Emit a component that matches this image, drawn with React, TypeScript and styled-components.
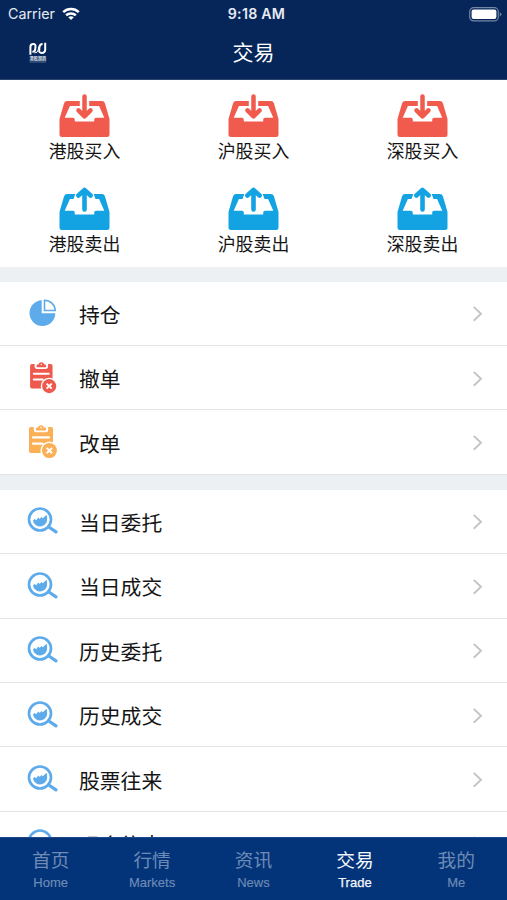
import React from "react";
import styled, { createGlobalStyle } from "styled-components";

const Global = createGlobalStyle`
  * { box-sizing: border-box; }
  body { margin: 0; background: #fff; }
`;

const Screen = styled.div`
  width: 507px;
  height: 900px;
  overflow: hidden;
  display: flex;
  flex-direction: column;
  background: #fff;
  color: #151515;
  font-family: "Liberation Sans", "Noto Sans CJK SC", sans-serif;
`;

const Header = styled.header`
  height: 80px;
  flex: none;
  background: #06265a;
  color: #fff;
  border-bottom: 1px solid #2a4470;
`;

const StatusBar = styled.div`
  height: 27px;
  display: grid;
  grid-template-columns: 1fr auto 1fr;
  align-items: center;
  padding: 1px 5px 0 8px;
  font-family: Inter, sans-serif;
  font-size: 14.3px;
  line-height: 18px;
  color: #e6ebf3;
`;

const Carrier = styled.div`
  display: flex;
  align-items: center;
  gap: 7px;
`;

const Clock = styled.div`
  font-weight: 600;
  font-size: 14.2px;
  letter-spacing: 0.25px;
  padding-left: 3px;
`;

const BatterySlot = styled.div`
  display: flex;
  justify-content: flex-end;
`;

const TitleBar = styled.div`
  height: 52px;
  display: grid;
  grid-template-columns: 1fr auto 1fr;
  align-items: center;
  padding-left: 29px;
  padding-right: 29px;
`;

const Title = styled.h1`
  margin: 0;
  font-size: 21px;
  line-height: 30px;
  font-weight: 400;
`;

const Actions = styled.section`
  height: 187px;
  flex: none;
  display: grid;
  grid-template-columns: repeat(3, 1fr);
  grid-template-rows: 93px 93px;
  padding-top: 1px;
`;

const Action = styled.div`
  display: flex;
  flex-direction: column;
  align-items: center;
  padding-top: 13px;
  svg { display: block; }
`;

const ActionLabel = styled.span`
  font-size: 17.9px;
  line-height: 26px;
  margin-top: 2px;
`;

const Gap = styled.div<{ $h: number }>`
  height: ${(p) => p.$h}px;
  flex: none;
  background: #edf0f3;
`;

const List = styled.main`
  flex: 1;
  min-height: 0;
  overflow: hidden;
`;

const Row = styled.div`
  height: 64.4px;
  display: grid;
  grid-template-columns: 52px 1fr 12px;
  align-items: center;
  padding: 0 23px 0 27px;
  border-bottom: 1.5px solid #e3e4e6;
  svg { display: block; }
`;

const RowLabel = styled.span`
  font-size: 20.8px;
  line-height: 30px;
  padding-top: 5px;
`;

const TabBar = styled.nav`
  height: 63px;
  flex: none;
  display: grid;
  grid-template-columns: repeat(5, 1fr);
  background: #033479;
  border-top: 1px solid #1c4a88;
`;

const Tab = styled.div<{ $active?: boolean }>`
  display: flex;
  flex-direction: column;
  align-items: center;
  padding-top: 10px;
  color: ${(p) => (p.$active ? "#f4f7fb" : "#6e8bb6")};
`;

const TabName = styled.span`
  font-size: 18.7px;
  line-height: 26px;
`;

const TabSub = styled.span<{ $active?: boolean }>`
  font-size: 13px;
  line-height: 17px;
  -webkit-text-stroke: ${(p) => (p.$active ? "0.25px" : "0.15px")};
`;

const Wifi = () => (
  <svg width="18" height="14" viewBox="0 0 18 14" fill="none" stroke="#fff" strokeWidth="2.5">
    <path d="M1.2 5.1C5.6 .9 12.4 .9 16.8 5.1" />
    <path d="M4.1 8.3C6.9 5.8 11.1 5.8 13.9 8.3" />
    <path d="M9 13L6.2 10.3Q9 8.1 11.8 10.3Z" fill="#fff" stroke="none" />
  </svg>
);

const Battery = () => (
  <svg width="33" height="15" viewBox="0 0 33 15">
    <rect x=".7" y=".7" width="28.6" height="13.2" rx="4" fill="none" stroke="#7386a5" strokeWidth="1.2" />
    <rect x="2.6" y="2.5" width="24.8" height="9.6" rx="2" fill="#fff" />
    <path d="M30.8 5.2Q32.4 6 32.4 7.3T30.8 9.4Z" fill="#7386a5" />
  </svg>
);

const LogoText = styled.text`
  font-family: "Noto Sans CJK SC", sans-serif;
  font-size: 4.2px;
  font-weight: 700;
`;

const Logo = () => (
  <svg width="18" height="22" viewBox="0 0 18 22">
    <g fill="none" stroke="#fff" strokeWidth="2">
      <path d="M1.4 12.8V5.2Q1.4 2 4.2 2Q6.8 2 6.5 4.7L6.2 7.4Q5.9 9.8 3.4 9.8" />
      <path d="M13.6 2Q10.8 2 10.5 4.8L10.2 8Q10 11 12.6 11Q16.2 11 16.2 7.6V.8" />
      <path d="M5.4 10.9Q8.6 11.3 9.2 7.8L9.8 4.5" strokeWidth="1" />
    </g>
    <LogoText x=".5" y="18" fill="#e5eaf2">港股超商</LogoText>
    <path d="M.5 20H17" stroke="#566c93" strokeWidth="1" />
  </svg>
);

const Tray = ({ out }: { out?: boolean }) => {
  const color = out ? "#13a3e2" : "#f15b4e";
  const left = out ? "H15.8L14 12" : "H20.3V12";
  const right = out ? "H36L34.2 7" : "H29.7V7";
  return (
    <svg width="51" height="43" viewBox="0 0 50 43">
      <path
        fill={color}
        d={`M0 25L4.5 9.4Q5.2 7 7.7 7${left}H10.4L5.2 23.8H13.4Q15.3 23.8 15.3 25.7V27.4H34.7V25.7Q34.7 23.8 36.6 23.8H44.8L39.6 12${right}H42.3Q44.8 7 45.5 9.4L50 25V40.5Q50 43 47.5 43H2.5Q0 43 0 40.5Z`}
      />
      {out ? (
        <path d="M25 22.4V3.2M18.9 8.5L25 2.9L31.1 8.5" fill="none" stroke={color} strokeWidth="4.6" strokeLinecap="round" strokeLinejoin="round" />
      ) : (
        <g fill="none" strokeLinecap="round" strokeLinejoin="round">
          <path d="M25 4V22" stroke="#fff" strokeWidth="7.4" strokeLinecap="butt" />
          <path d="M25 2.5V22M19 16.4L25 22.4L31 16.4" stroke={color} strokeWidth="4.5" />
        </g>
      )}
    </svg>
  );
};

const Pie = () => (
  <svg width="32" height="32" viewBox="0 0 32 32">
    <path d="M14.7 3.2V16.2H28.3A12.9 12.9 0 1 1 14.7 3.2Z" fill="#5eabec" />
    <path d="M17.5 3.2V13.5H28.2A10.7 10.7 0 0 0 17.5 3.2Z" fill="#fff" stroke="#5eabec" strokeWidth="1.6" />
  </svg>
);

const Clipboard = ({ color, large }: { color: string; large?: boolean }) => (
  <svg width="32" height="34" viewBox={large ? "0 1 32 34" : "-1.3 -.2 34.2 36.2"}>
    <path d="M4 3H24Q26 3 26 5V29H4Q2 29 2 27V5Q2 3 4 3Z" fill={color} />
    <path d="M6.8 2V6Q6.8 8.3 9.1 8.3H18.9Q21.2 8.3 21.2 6V2Z" fill="#fff" />
    <path d="M9 6.5V4.4Q9 3.4 10 3.4H11Q11.6 1.2 14 1.2T17 3.4H18Q19 3.4 19 4.4V6.5Z" fill={color} />
    <circle cx="14" cy="3.6" r=".8" fill="#fff" />
    <path d="M6 13.4H22M6 19.6H15.5" stroke="#fff" strokeWidth="2.2" strokeLinecap="round" />
    <circle cx="22.4" cy="26.6" r="9" fill="#fff" />
    <circle cx="22.4" cy="26.6" r="7.5" fill={color} />
    <path d="M19.7 23.9L25.1 29.3M25.1 23.9L19.7 29.3" stroke="#fff" strokeWidth="2" />
  </svg>
);

const Magnifier = () => (
  <svg width="32" height="32" viewBox="0 0 32 32" fill="none" stroke="#5eabec">
    <circle cx="13" cy="14.5" r="11" strokeWidth="2.7" />
    <path d="M21.8 22L29 26.9" strokeWidth="3.3" strokeLinecap="round" />
    <path d="M6 15.2L7.7 14L9.2 15.2L11.3 12.6L12.8 14L14.2 12L15.8 13.3L19.6 9.8Q21.4 16.8 17.6 19.7Q13.4 23 9 20.2Q6.1 18.4 6 15.2Z" fill="#5eabec" stroke="none" />
  </svg>
);

const Chevron = () => (
  <svg width="12" height="18" viewBox="0 -.8 12 18" fill="none" stroke="#c3c4c6" strokeWidth="1.9">
    <path d="M1.7 2.1L9 9L1.7 15.9" />
  </svg>
);

const buys = ["港股买入", "沪股买入", "深股买入"];
const sells = ["港股卖出", "沪股卖出", "深股卖出"];
const records = ["当日委托", "当日成交", "历史委托", "历史成交", "股票往来", "现金往来"];
const tabs = [
  ["首页", "Home"],
  ["行情", "Markets"],
  ["资讯", "News"],
  ["交易", "Trade"],
  ["我的", "Me"],
];

export default function App() {
  return (
    <Screen>
      <Global />
      <Header>
        <StatusBar>
          <Carrier>Carrier <Wifi /></Carrier>
          <Clock>9:18 AM</Clock>
          <BatterySlot><Battery /></BatterySlot>
        </StatusBar>
        <TitleBar>
          <Logo />
          <Title>交易</Title>
        </TitleBar>
      </Header>
      <Actions>
        {buys.map((t) => <Action key={t}><Tray /><ActionLabel>{t}</ActionLabel></Action>)}
        {sells.map((t) => <Action key={t}><Tray out /><ActionLabel>{t}</ActionLabel></Action>)}
      </Actions>
      <List>
        <Gap $h={14.6} />
        <Row><Pie /><RowLabel>持仓</RowLabel><Chevron /></Row>
        <Row><Clipboard color="#ef584d" /><RowLabel>撤单</RowLabel><Chevron /></Row>
        <Row><Clipboard color="#fbb056" large /><RowLabel>改单</RowLabel><Chevron /></Row>
        <Gap $h={15} />
        {records.map((t) => <Row key={t}><Magnifier /><RowLabel>{t}</RowLabel><Chevron /></Row>)}
      </List>
      <TabBar>
        {tabs.map(([name, sub]) => (
          <Tab key={sub} $active={sub === "Trade"}>
            <TabName>{name}</TabName>
            <TabSub $active={sub === "Trade"}>{sub}</TabSub>
          </Tab>
        ))}
      </TabBar>
    </Screen>
  );
}
